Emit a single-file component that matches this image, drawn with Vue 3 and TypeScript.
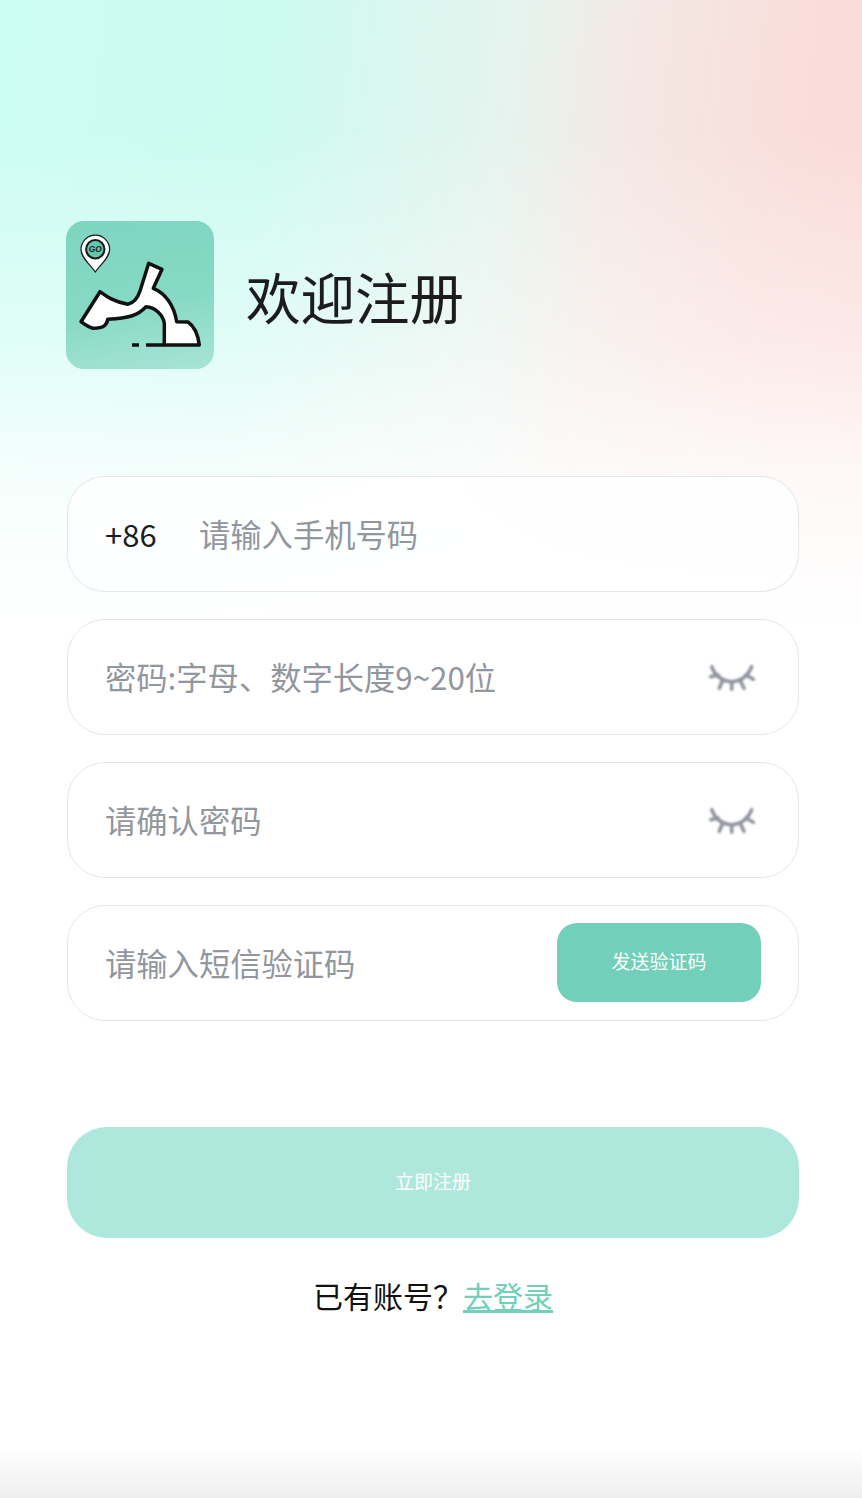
<template>
  <div class="page">
    <header class="head">
      <div class="logo">
        <svg viewBox="0 0 148 148" width="148" height="148">
          <path
            class="pin"
            d="M29.300 51C24 43.500 15 36.500 15 28.500A14.300 14.300 0 0 1 43.600 28.500C43.600 36.500 34.600 43.500 29.300 51Z"
          />
          <circle class="pin-dot" cx="29.300" cy="28.300" r="9.200" />
          <text class="pin-text" x="22.800" y="31.400" textLength="13" lengthAdjust="spacingAndGlyphs">GO</text>
          <path
            class="road"
            d="M15 100.700L34 70.700C40 75 46 80 61.700 83.300C68 82 72 76 74 70L82.700 42.300L96 48.300L87.300 67.300C99 72 108 84 110.700 100.700L122 101C128 105 132 114 133.300 124H98.300V102.300C97 94 89 86 80 85.700C72 95 62 97 41.700 98.300C41 104 38 107 27 107.300C22 106 18 103 15 100.700Z"
          />
          <path class="road-line" d="M98.300 124H80M73 124H66" />
        </svg>
      </div>
      <h1 class="title">欢迎注册</h1>
    </header>

    <form class="form" @submit.prevent>
      <div class="field">
        <span class="code">+86</span>
        <input v-model="phone" class="input" type="tel" placeholder="请输入手机号码" />
      </div>

      <div v-for="item in secretFields" :key="item.placeholder" class="field">
        <input v-model="item.value" class="input" type="password" :placeholder="item.placeholder" />
        <svg class="eye" viewBox="0 0 48 30" width="48" height="30">
          <path d="M3.700 4.700Q9 19 23.700 19.700Q38 19 43.700 4.700" />
          <path d="M2.700 14.700L10.300 13M11.300 26.300L14.700 18M23.700 27.300V19.700M36 26.300L32 18M45.300 17.300L38 13" />
        </svg>
      </div>

      <div class="field field-sms">
        <input v-model="smsCode" class="input" type="text" placeholder="请输入短信验证码" />
        <button class="send" type="button">发送验证码</button>
      </div>

      <button class="submit" type="submit">立即注册</button>
    </form>

    <p class="login">已有账号？<a class="login-link" href="#">去登录</a></p>
  </div>
</template>

<script setup lang="ts">
import { reactive, ref } from "vue";

const phone = ref("");
const smsCode = ref("");

const secretFields = reactive([
  { placeholder: "密码:字母、数字长度9~20位", value: "" },
  { placeholder: "请确认密码", value: "" },
]);
</script>

<style>
body {
  background: #fff;
}
</style>

<style scoped>
.page {
  box-sizing: border-box;
  width: 862px;
  height: 1498px;
  overflow: hidden;
  padding: 221px 63px 0 67px;
  font-family: "Noto Sans CJK SC", "Noto Sans", sans-serif;
  color: #1c1c1e;
  background:
    linear-gradient(to bottom, rgba(238, 238, 238, 0) 1450px, #eeeeee 1498px),
    linear-gradient(
      to bottom,
      rgba(255, 255, 255, 0) 130px,
      rgba(255, 255, 255, 0.4) 340px,
      rgba(255, 255, 255, 0.82) 480px,
      #fff 630px
    ),
    linear-gradient(97deg, #ccfdf3 0%, #ccfbf0 26%, #e6f3ee 50%, #f3e9e5 60%, #f9dedb 76%, #fadbd8 86%, #fadfdc 100%);
}

.head {
  display: flex;
  align-items: center;
  gap: 32px;
  margin-left: -1px;
}

.logo {
  width: 148px;
  height: 148px;
  flex: none;
  border-radius: 18px;
  overflow: hidden;
  background: linear-gradient(170deg, #7dd5c0, #86d9c5 55%, #a8e4d6);
}

.logo svg {
  display: block;
}

.pin {
  fill: #fff;
  stroke: #1a1a1a;
  stroke-width: 1.2;
}

.pin-dot {
  fill: #63c7ae;
  stroke: #1a1a1a;
  stroke-width: 2;
}

.pin-text {
  fill: #1a1a1a;
  font-size: 9px;
  font-weight: 700;
  font-style: italic;
  font-family: "Liberation Sans", sans-serif;
}

.road {
  fill: #fff;
  stroke: #111;
  stroke-width: 3.500;
  stroke-linejoin: round;
}

.road-line {
  fill: none;
  stroke: #111;
  stroke-width: 3.500;
}

.title {
  margin: 2px 0 0;
  font-size: 54.500px;
  font-weight: 400;
  line-height: 1.2;
}

.form {
  display: flex;
  flex-direction: column;
  gap: 27px;
  margin-top: 107px;
}

.field {
  box-sizing: border-box;
  display: flex;
  align-items: center;
  height: 116px;
  padding: 0 36px 0 37px;
  background: rgba(255, 255, 255, 0.75);
  border: 1px solid #e4e6e8;
  border-radius: 38px;
}

.field-sms {
  padding-right: 37px;
}

.code {
  flex: none;
  width: 94px;
  padding-bottom: 2px;
  font-size: 31px;
}

.input {
  flex: 1;
  min-width: 0;
  padding: 0 0 2px;
  border: none;
  outline: none;
  background: transparent;
  color: #1c1c1e;
  font: inherit;
  font-size: 31.300px;
}

.input::placeholder {
  color: #92969d;
  opacity: 1;
}

.eye {
  flex: none;
  margin-right: 6px;
  fill: none;
  stroke: #8f939c;
  stroke-width: 3.600;
  stroke-linecap: round;
  filter: blur(0.8px);
}

.send {
  flex: none;
  width: 204px;
  height: 79px;
  margin-top: -2px;
  padding: 0 0 3px;
  border: none;
  border-radius: 20px;
  background: #71cfba;
  color: #fff;
  font: inherit;
  font-size: 19px;
}

.submit {
  height: 111px;
  margin-top: 79px;
  padding: 0 0 4px;
  border: none;
  border-radius: 40px;
  background: #aee8dc;
  color: #fff;
  font: inherit;
  font-size: 19px;
}

.login {
  margin: 33px 0 0;
  text-align: center;
  font-size: 30px;
  line-height: 48px;
  color: #111;
}

.login-link {
  color: #71cfba;
  text-decoration: underline;
}
</style>
